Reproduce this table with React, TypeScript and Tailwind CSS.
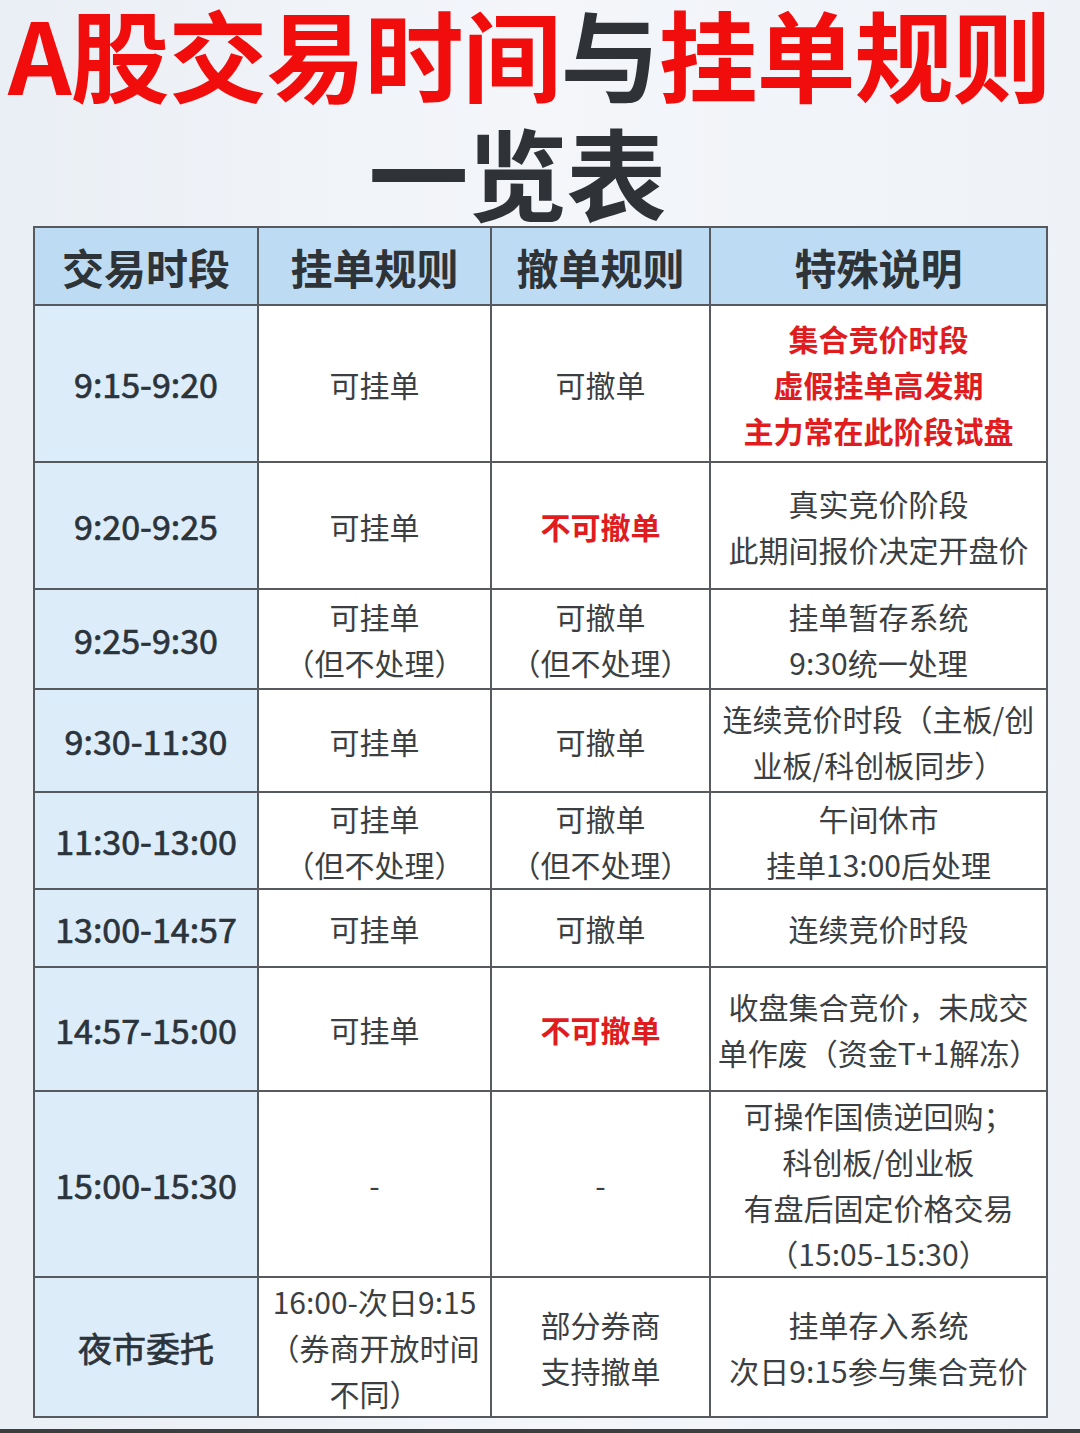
import React from 'react';

type Cell = { lines: string[]; red?: boolean };
type Row = { time: string; h: number; order: Cell; cancel: Cell; note: Cell };

const rows: Row[] = [
  {
    time: '9:15-9:20',
    h: 157,
    order: { lines: ['可挂单'] },
    cancel: { lines: ['可撤单'] },
    note: { lines: ['集合竞价时段', '虚假挂单高发期', '主力常在此阶段试盘'], red: true },
  },
  {
    time: '9:20-9:25',
    h: 127,
    order: { lines: ['可挂单'] },
    cancel: { lines: ['不可撤单'], red: true },
    note: { lines: ['真实竞价阶段', '此期间报价决定开盘价'] },
  },
  {
    time: '9:25-9:30',
    h: 100,
    order: { lines: ['可挂单', '（但不处理）'] },
    cancel: { lines: ['可撤单', '（但不处理）'] },
    note: { lines: ['挂单暂存系统', '9:30统一处理'] },
  },
  {
    time: '9:30-11:30',
    h: 103,
    order: { lines: ['可挂单'] },
    cancel: { lines: ['可撤单'] },
    note: { lines: ['连续竞价时段（主板/创', '业板/科创板同步）'] },
  },
  {
    time: '11:30-13:00',
    h: 97,
    order: { lines: ['可挂单', '（但不处理）'] },
    cancel: { lines: ['可撤单', '（但不处理）'] },
    note: { lines: ['午间休市', '挂单13:00后处理'] },
  },
  {
    time: '13:00-14:57',
    h: 78,
    order: { lines: ['可挂单'] },
    cancel: { lines: ['可撤单'] },
    note: { lines: ['连续竞价时段'] },
  },
  {
    time: '14:57-15:00',
    h: 124,
    order: { lines: ['可挂单'] },
    cancel: { lines: ['不可撤单'], red: true },
    note: { lines: ['收盘集合竞价，未成交', '单作废（资金T+1解冻）'] },
  },
  {
    time: '15:00-15:30',
    h: 185,
    order: { lines: ['-'] },
    cancel: { lines: ['-'] },
    note: { lines: ['可操作国债逆回购；', '科创板/创业板', '有盘后固定价格交易', '（15:05-15:30）'] },
  },
  {
    time: '夜市委托',
    h: 138,
    order: { lines: ['16:00-次日9:15', '（券商开放时间', '不同）'] },
    cancel: { lines: ['部分券商', '支持撤单'] },
    note: { lines: ['挂单存入系统', '次日9:15参与集合竞价'] },
  },
];

const font = { fontFamily: '"Noto Sans CJK SC", "Noto Sans", sans-serif' };

function Body({ cell }: { cell: Cell }) {
  return (
    <td className="border-2 border-[#56595d] bg-white text-center align-middle px-0">
      {cell.lines.map((l, i) => (
        <div
          key={i}
          className={
            cell.red
              ? 'whitespace-nowrap text-[30px] leading-[46px] font-bold text-[#e11c1f]'
              : 'whitespace-nowrap text-[30px] leading-[46px] text-[#3c3f42]'
          }
        >
          {l}
        </div>
      ))}
    </td>
  );
}

export default function App() {
  return (
    <div
      className="relative w-[1080px] h-[1433px] overflow-hidden bg-gradient-to-r from-[#eaeff5] via-[#f4f6fa] to-[#eef2f6] flex flex-col"
      style={font}
    >
      {/* Title */}
      <h1 className="pl-[8px] pt-[2px] text-[99px] leading-[100px] font-bold tracking-[-1px] whitespace-nowrap text-[#f20d0d]">
        A股交易时间<span className="text-[#2f3337]">与</span>挂单规则
      </h1>
      <h2 className="mt-[14px] text-center pr-[46px] text-[100px] leading-[110px] font-bold text-[#2f3337] tracking-[-1px]">
        一览表
      </h2>

      {/* Table */}
      <div className="pl-[33px]">
        <table className="border-collapse table-fixed w-[1013px]">
          <colgroup>
            <col className="w-[224px]" />
            <col className="w-[233px]" />
            <col className="w-[219px]" />
            <col className="w-[337px]" />
          </colgroup>
          <thead>
            <tr className="h-[78px] bg-[#bddbf3]">
              {['交易时段', '挂单规则', '撤单规则', '特殊说明'].map((t) => (
                <th
                  key={t}
                  className="border-2 border-[#56595d] text-[42px] font-bold text-[#2e3338] text-center align-middle"
                >
                  {t}
                </th>
              ))}
            </tr>
          </thead>
          <tbody>
            {rows.map((r) => (
              <tr key={r.time} style={{ height: r.h }}>
                <td className="border-2 border-[#56595d] bg-[#ddecf9] text-center align-middle text-[34px] font-normal [-webkit-text-stroke:0.7px_#2b333b] text-[#2b333b] whitespace-nowrap">
                  {r.time}
                </td>
                <Body cell={r.order} />
                <Body cell={r.cancel} />
                <Body cell={r.note} />
              </tr>
            ))}
          </tbody>
        </table>
      </div>

      <div className="absolute left-0 right-0 bottom-0 h-[4px] bg-[#3b3d40]" />
    </div>
  );
}
